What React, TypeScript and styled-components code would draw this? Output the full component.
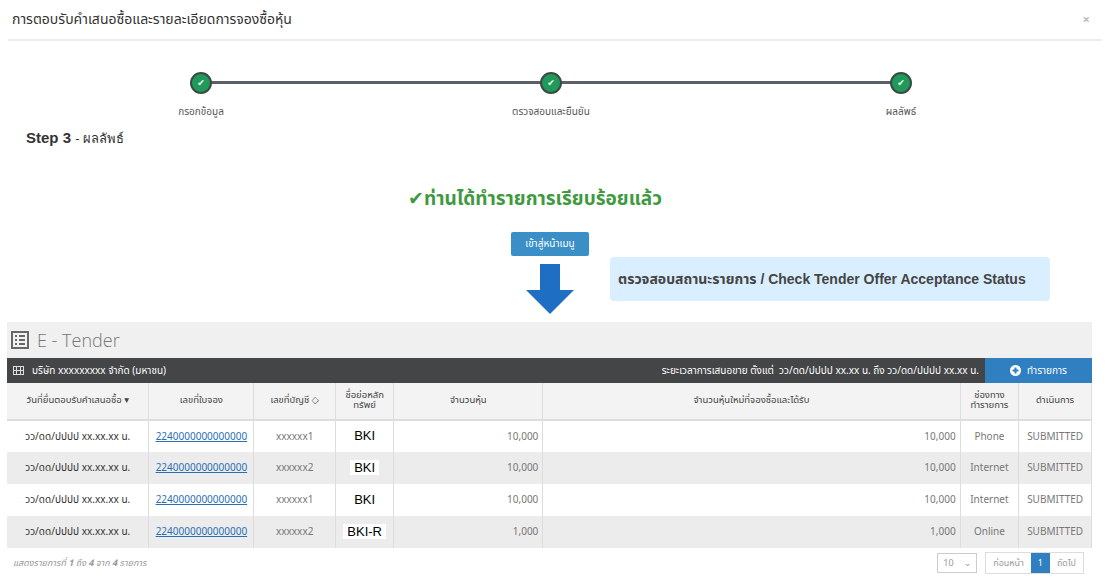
import React from "react";
import styled, { createGlobalStyle } from "styled-components";

const G = createGlobalStyle`
  body { margin: 0; background: #fff; font-family: "Noto Sans Thai", "Open Sans", "DejaVu Sans", sans-serif; color: #333; }
`;
const Page = styled.div`width: 1110px; height: 578px; overflow: hidden; display: flex; flex-direction: column;`;
const Header = styled.div`
  height: 44px; margin: 0 8px; border-bottom: 2px solid #eee; display: flex; align-items: center;
  justify-content: space-between; padding: 0 4px; font-size: 14px; color: #333;
`;
const Close = styled.span`color: #bbb; font-size: 13px; font-weight: bold; margin-right: 8px;`;
const Stepper = styled.div`display: grid; grid-template-columns: 350px 350px 350px; margin: 31px 0 0 26px; position: relative;`;
const Line = styled.div`position: absolute; top: 9px; left: 175px; width: 700px; height: 3px; background: #5b6068;`;
const Step = styled.div`display: flex; flex-direction: column; align-items: center; gap: 10px; position: relative;`;
const Dot = styled.div`
  width: 18px; height: 18px; border-radius: 50%; background: #1f9a5a; border: 2px solid #3c4a44;
  display: flex; align-items: center; justify-content: center; color: #fff; font-size: 9px;
`;
const StepLabel = styled.div`font-size: 10px; color: #555;`;
const StepTitle = styled.div`margin: 8px 0 0 26px; font-size: 15px; font-weight: bold; color: #333; font-family: "Liberation Sans", sans-serif;
  span { font-weight: normal; font-size: 13px; }`;
const Success = styled.div`margin-top: 36px; padding-right: 40px; text-align: center; color: #3f9a3f; font-size: 19px; font-weight: bold;`;
const Mid = styled.div`display: grid; grid-template-columns: 510px 80px 20px 440px; margin-top: 18px; `;
const CenterCol = styled.div`grid-column: 2; display: flex; flex-direction: column; align-items: center; gap: 8px;`;
const MenuBtn = styled.div`width: 78px; height: 24px; background: #3a8fc6; color: #fff; font-size: 10px; display: flex; align-items: center; justify-content: center; border-radius: 2px;`;
const Info = styled.div`grid-column: 4; margin-top: 25px; height: 44px; background: #d9efff; border-radius: 4px;
  display: flex; align-items: center; padding-left: 8px; font-size: 14px; font-weight: bold; color: #444; font-family: "Liberation Sans", "Noto Sans Thai", sans-serif;`;
const Panel = styled.div`margin: 8px 18px 0 7px; background: #f0f0f0; flex: 1; display: flex; flex-direction: column;`;
const PanelTitle = styled.div`height: 36px; display: flex; align-items: center; gap: 8px; padding-left: 4px; font-size: 18px; color: #777; font-family: "Open Sans", sans-serif; font-weight: 300;`;
const Bar = styled.div`height: 25px; background: #444547; display: flex; align-items: center; color: #fff; font-size: 10px;`;
const BarLeft = styled.div`flex: 1; display: flex; align-items: center; gap: 8px; padding-left: 6px;`;
const BarBtn = styled.div`width: 107px; align-self: stretch; background: #2f7fc1; display: flex; align-items: center; justify-content: center; gap: 6px;`;
const Table = styled.table`border-collapse: collapse; width: 100%; font-size: 10px; background: #fff;`;
const Th = styled.th<{ w: number }>`width: ${p => p.w}px; height: 34px; background: #f3f3f3; border-right: 1px solid #ddd; border-bottom: 2px solid #ddd; font-weight: normal; color: #444; font-size: 9.5px; line-height: 1.05;`;
const Tr = styled.tr<{ alt?: boolean }>`height: 32px; background: ${p => (p.alt ? "#ececec" : "#fff")};`;
const Td = styled.td<{ align?: string }>`border-right: 1px solid #ddd; text-align: ${p => p.align || "center"}; padding: 0 4px; color: #777; font-size: 10px;`;
const Link = styled.span`color: #2a6fb5; text-decoration: underline;`;
const Sym = styled.span`background: #fff; color: #000; font-size: 13px; padding: 0 4px; font-family: "Liberation Sans", sans-serif;`;
const Footer = styled.div`height: 30px; display: flex; align-items: center; justify-content: space-between; padding: 0 8px 0 6px; background: #fff; font-size: 9px; color: #999; font-style: italic;`;
const Pager = styled.div`display: flex; align-items: center; gap: 8px; font-style: normal;`;
const Sel = styled.div`width: 40px; height: 20px; border: 1px solid #ccc; display: flex; align-items: center; justify-content: space-between; padding: 0 5px; box-sizing: border-box;`;
const Pages = styled.div`display: flex; border: 1px solid #ddd; height: 20px;`;
const Pg = styled.div<{ on?: boolean }>`padding: 0 7px; display: flex; align-items: center; background: ${p => (p.on ? "#2f7fc1" : "#fff")}; color: ${p => (p.on ? "#fff" : "#999")};`;

const rows = [
  ["xxxxxx1", "BKI", "10,000", "10,000", "Phone"],
  ["xxxxxx2", "BKI", "10,000", "10,000", "Internet"],
  ["xxxxxx1", "BKI", "10,000", "10,000", "Internet"],
  ["xxxxxx2", "BKI-R", "1,000", "1,000", "Online"],
];

export default function App() {
  return (
    <Page>
      <G />
      <Header>การตอบรับคำเสนอซื้อและรายละเอียดการจองซื้อหุ้น<Close>×</Close></Header>
      <Stepper>
        <Line />
        {["กรอกข้อมูล", "ตรวจสอบและยืนยัน", "ผลลัพธ์"].map(l => (
          <Step key={l}><Dot>✔</Dot><StepLabel>{l}</StepLabel></Step>
        ))}
      </Stepper>
      <StepTitle>Step 3 <span>- ผลลัพธ์</span></StepTitle>
      <Success>✔ท่านได้ทำรายการเรียบร้อยแล้ว</Success>
      <Mid>
        <CenterCol>
          <MenuBtn>เข้าสู่หน้าเมนู</MenuBtn>
          <svg width="56" height="50" viewBox="0 0 56 50"><path d="M18 0h20v26h14L28 50 4 26h14z" fill="#1e6fc4" /></svg>
        </CenterCol>
        <Info>ตรวจสอบสถานะรายการ / Check Tender Offer Acceptance Status</Info>
      </Mid>
      <Panel>
        <PanelTitle>
          <svg width="18" height="18" viewBox="0 0 18 18"><rect x="1" y="1" width="16" height="16" fill="none" stroke="#666" strokeWidth="2" /><path d="M4 5h2M8 5h6M4 9h2M8 9h6M4 13h2M8 13h6" stroke="#666" strokeWidth="2" /></svg>
          E - Tender
        </PanelTitle>
        <Bar>
          <BarLeft>
            <svg width="11" height="9" viewBox="0 0 11 9"><path d="M0 0h11v9H0z M1 1v3h2V1z M4 1v3h3V1z M8 1v3h2V1z M1 5v3h2V5z M4 5v3h3V5z M8 5v3h2V5z" fill="#ddd" fillRule="evenodd" /></svg>
            บริษัท xxxxxxxxx จำกัด (มหาชน)
          </BarLeft>
          <span style={{ marginRight: 6 }}>ระยะเวลาการเสนอขาย ตั้งแต่ &nbsp;วว/ดด/ปปปป xx.xx น. ถึง วว/ดด/ปปปป xx.xx น.</span>
          <BarBtn>
            <svg width="11" height="11" viewBox="0 0 11 11"><circle cx="5.5" cy="5.5" r="5.5" fill="#fff" /><path d="M5.5 2.5v6M2.5 5.5h6" stroke="#2f7fc1" strokeWidth="2" /></svg>
            ทำรายการ
          </BarBtn>
        </Bar>
        <Table>
          <thead>
            <tr>
              <Th w={143}>วันที่ยื่นตอบรับคำเสนอซื้อ ▾</Th>
              <Th w={102}>เลขที่ใบจอง</Th>
              <Th w={80}>เลขที่บัญชี ◇</Th>
              <Th w={56}>ชื่อย่อหลัก<br />ทรัพย์</Th>
              <Th w={150}>จำนวนหุ้น</Th>
              <Th w={428}>จำนวนหุ้นใหม่ที่จองซื้อและได้รับ</Th>
              <Th w={56}>ช่องทาง<br />ทำรายการ</Th>
              <Th w={70}>ดำเนินการ</Th>
            </tr>
          </thead>
          <tbody>
            {rows.map((r, i) => (
              <Tr key={i} alt={i % 2 === 1}>
                <Td style={{ color: "#333" }}>วว/ดด/ปปปป xx.xx.xx น.</Td>
                <Td><Link>2240000000000000</Link></Td>
                <Td>{r[0]}</Td>
                <Td><Sym>{r[1]}</Sym></Td>
                <Td align="right">{r[2]}</Td>
                <Td align="right">{r[3]}</Td>
                <Td>{r[4]}</Td>
                <Td>SUBMITTED</Td>
              </Tr>
            ))}
          </tbody>
        </Table>
        <Footer>
          <span>แสดงรายการที่ <b>1</b> ถึง <b>4</b> จาก <b>4</b> รายการ</span>
          <Pager>
            <Sel><span>10</span><span>⌄</span></Sel>
            <Pages><Pg>ก่อนหน้า</Pg><Pg on>1</Pg><Pg>ถัดไป</Pg></Pages>
          </Pager>
        </Footer>
      </Panel>
    </Page>
  );
}
